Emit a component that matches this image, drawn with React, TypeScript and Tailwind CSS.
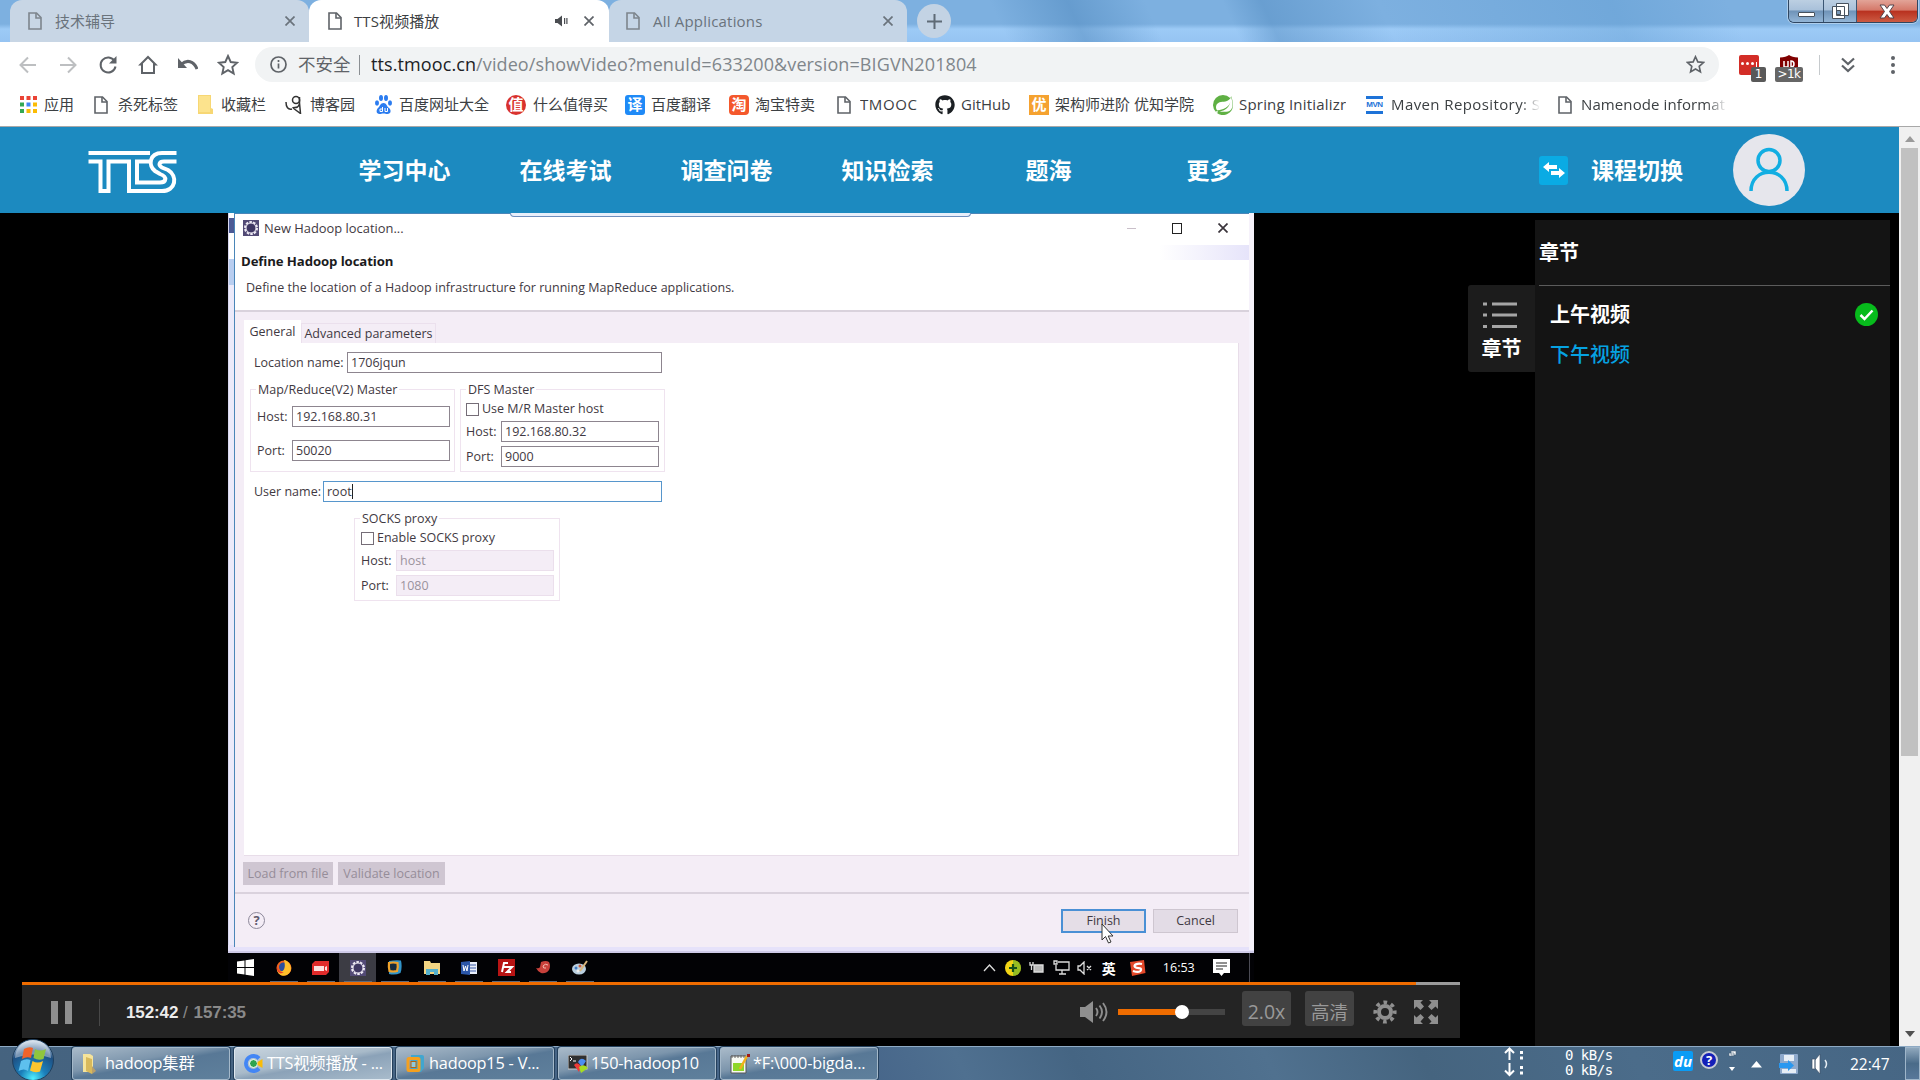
import type { ReactNode } from "react";
import { FaGithub } from "react-icons/fa";
import { SiSpring } from "react-icons/si";

const ui = "font-['Open_Sans','Noto_Sans_CJK_SC',sans-serif]";

function DocIcon({ color = "#5f6368" }: { color?: string }) {
  return (
    <svg width="14" height="18" viewBox="0 0 14 18" fill="none" stroke={color} strokeWidth="1.6" className="shrink-0">
      <path d="M1 1h7.5L13 5.5V17H1z" />
      <path d="M8 1v5h5" />
    </svg>
  );
}

function Cross({ color = "#5f6368" }: { color?: string }) {
  return (
    <svg width="10" height="10" viewBox="0 0 10 10" stroke={color} strokeWidth="1.7" className="shrink-0">
      <path d="M0.5 0.5l9 9M9.5 0.5l-9 9" />
    </svg>
  );
}

function TabStrip() {
  return (
    <div className="relative flex h-[42px] bg-[linear-gradient(180deg,#7db0e0_0px,#7db0e0_24px,#9ccaf6_29px,#96c4f2_42px)]">
      <div className="absolute inset-0 bg-[linear-gradient(65deg,transparent_52%,#4f88bd80_56%,transparent_60%,transparent_64%,#4f88bd70_66%,transparent_72%,#5c9ad060_84%,transparent_90%)]" />
      <div className="relative ml-[10px] flex h-[42px] w-[299px] items-center rounded-t-xl bg-[#c8d6e5] pl-[18px] text-[15px] text-[#6a737c]">
        <DocIcon color="#7d858d" />
        <span className="ml-[13px] w-[230px]">技术辅导</span>
        <Cross color="#6a737c" />
      </div>
      <div className="relative flex h-[42px] w-[300px] items-center rounded-t-xl bg-white pl-[19px] text-[15px] text-[#3c4043]">
        <DocIcon />
        <span className="ml-[12px] w-[201px] tracking-[0.1px]">TTS视频播放</span>
        <svg width="13" height="12" viewBox="0 0 13 12" fill="#4a4d51">
          <path d="M0 4h2.500L7 0.500v11L2.500 8H0zM9 3h1.200v6H9zM11.300 3h1.200v6h-1.200z" />
        </svg>
        <span className="ml-[16px] flex"><Cross /></span>
      </div>
      <div className="relative flex h-[42px] w-[298px] items-center rounded-t-xl bg-[#c5d5e6] pl-[17px] text-[15px] text-[#6a737c]">
        <DocIcon color="#7d858d" />
        <span className="ml-[13px] w-[230px] tracking-[0.2px]">All Applications</span>
        <Cross color="#6a737c" />
      </div>
      <div className="relative ml-[10px] mt-[4px] flex size-[34px] items-center justify-center rounded-full bg-[#c3d3e4]">
        <svg width="15" height="15" viewBox="0 0 15 15" stroke="#5f6b76" strokeWidth="2"><path d="M7.500 0v15M0 7.500h15" /></svg>
      </div>
      <div className="relative ml-auto mr-[2px] flex h-[23px] overflow-hidden rounded-b-md border border-t-0 border-[#2f4661] shadow-[0_0_0_1px_#ffffff60]">
        <div className="flex w-[35px] items-end justify-center border-r border-[#3b5673] bg-[linear-gradient(#bccfe2_0%,#a9c1da_45%,#6f93b8_50%,#93b5d6_100%)] pb-[5px]">
          <span className="h-[5px] w-[17px] rounded-[1px] border border-[#47525e] bg-white" />
        </div>
        <div className="flex w-[33px] items-center justify-center border-r border-[#3b5673] bg-[linear-gradient(#bccfe2_0%,#a9c1da_45%,#6f93b8_50%,#93b5d6_100%)]">
          <svg width="19" height="18" viewBox="0 0 19 18" fill="#fff" stroke="#47525e"><path d="M5.500 1.500h12v12h-12zM1.500 4.500h12v12h-12z" /><path d="M5.500 8.500h4v4h-4z" fill="#7898b8" /></svg>
        </div>
        <div className="flex w-[60px] items-center justify-center bg-[linear-gradient(#e2a498_0%,#d5796a_45%,#b93220_52%,#cc5a42_100%)]">
          <svg width="16" height="15" viewBox="0 0 16 15"><path d="M1 1h4.500L8 4.500 10.500 1H15l-4.500 6.500L15 14h-4.500L8 10.500 5.500 14H1l4.500-6.500z" fill="#fff" stroke="#50424a" /></svg>
        </div>
      </div>
    </div>
  );
}

const nav = { width: 20, height: 20, viewBox: "0 0 20 20", fill: "none", stroke: "#5f6368", strokeWidth: 2 };

function Star({ size }: { size: number }) {
  return (
    <svg width={size} height={size} viewBox="0 0 22 22" fill="none" stroke="#5f6368" strokeWidth="1.900" className="shrink-0">
      <path d="M11 2l2.700 6 6.500.7-4.900 4.400 1.400 6.400L11 16.200l-5.700 3.300 1.400-6.400L1.800 8.700l6.500-.7z" />
    </svg>
  );
}

function Toolbar() {
  return (
    <div className="flex h-[44px] items-center bg-white pt-px">
      <div className="ml-[18px] flex w-[237px] items-center gap-[20px]">
        <svg {...nav} stroke="#bdbfc1"><path d="M18 10H3M10 2.500L2.500 10l7.500 7.500" /></svg>
        <svg {...nav} stroke="#bdbfc1"><path d="M2 10h15M10 2.500l7.500 7.500-7.500 7.500" /></svg>
        <svg {...nav}><path d="M16.500 6A7.500 7.500 0 1 0 17.500 11.500" /><path d="M18.500 1v7.500H11z" fill="#5f6368" stroke="none" /></svg>
        <svg {...nav}><path d="M4 18V9.500H2.500L10 2l7.500 7.500H16V18z" /></svg>
        <svg {...nav}><path d="M3 9.500C9 4 16 6 19 14" strokeWidth="3" /><path d="M0 3v10h9z" fill="#5f6368" stroke="none" /></svg>
        <span className="ml-[-1px] flex"><Star size={22} /></span>
      </div>
      <div className={`flex h-[35px] w-[1464px] items-center rounded-full bg-[#f1f3f4] ${ui}`}>
        <svg width="17" height="17" viewBox="0 0 17 17" fill="none" stroke="#5f6368" strokeWidth="1.700" className="ml-[15px]"><circle cx="8.500" cy="8.500" r="7.500" /><path d="M8.500 7.500v5M8.500 4v2" /></svg>
        <span className="ml-[11px] w-[61px] text-[17.500px] text-[#5f6368]">不安全</span>
        <span className="h-[20px] w-px bg-[#8b8f93]" />
        <span className="ml-[11px] w-[1315px] text-[18px] tracking-[0.100px] text-[#80868b]"><span className="text-[#202124]">tts.tmooc.cn</span>/video/showVideo?menuId=633200&amp;version=BIGVN201804</span>
        <Star size={19} />
      </div>
      <div className="relative ml-[20px] flex h-[20px] w-[20px] items-center justify-center rounded-[2px] bg-[#d32d27]">
        <span className="flex gap-[2px]"><i className="size-[3px] rounded-full bg-white" /><i className="size-[3px] rounded-full bg-white" /><i className="size-[3px] rounded-full bg-white" /><i className="h-[5px] w-px bg-white" /></span>
        <span className="absolute left-[12px] top-[12px] h-[15px] w-[15px] rounded-[2px] bg-[#595959] text-center font-['DejaVu_Sans'] text-[12px] leading-[14px] text-white">1</span>
      </div>
      <div className="relative ml-[21px] h-[20px] w-[18px]">
        <svg width="18" height="20" viewBox="0 0 18 20"><path d="M0 2.500C4 2.500 7 1.500 9 0c2 1.500 5 2.500 9 2.500V14l-9 6-9-6z" fill="#800000" /><path d="M4 6v6h4V6M11 12V6a3 3 0 0 1 0 6" fill="none" stroke="#fff" strokeWidth="1.500" /></svg>
        <span className="absolute left-[-5px] top-[12px] h-[15px] w-[28px] rounded-[2px] bg-[#666] text-center font-['DejaVu_Sans'] text-[12px] leading-[14px] tracking-[-0.5px] text-white">&gt;1k</span>
      </div>
      <span className="ml-[21px] h-[20px] w-px bg-[#c6cacd]" />
      <svg width="14" height="16" viewBox="0 0 14 16" fill="none" stroke="#5f6368" strokeWidth="2.200" className="ml-[21px]"><path d="M1 1.500l6 5.500 6-5.500M1 8.500L7 14l6-5.500" /></svg>
      <svg width="6" height="18" viewBox="0 0 6 18" fill="#5f6368" className="ml-[35px]"><circle cx="3" cy="2" r="2" /><circle cx="3" cy="9" r="2" /><circle cx="3" cy="16" r="2" /></svg>
    </div>
  );
}

function Badge({ className, children }: { className: string; children: ReactNode }) {
  return <span className={`flex size-[20px] items-center justify-center text-[15px] font-bold leading-none text-white ${className}`}>{children}</span>;
}

const doc = <DocIcon />;
const fade = "[mask-image:linear-gradient(90deg,#000_86%,transparent)]";
const bookmarks: { w: string; iw: string; label: string; icon: ReactNode; t?: string }[] = [
  {
    w: "w-[74px]", iw: "w-[24px]", label: "应用",
    icon: (
      <svg width="17" height="17" viewBox="0 0 17 17">
        {["#ea4335", "#ea4335", "#ea4335", "#34a853", "#4285f4", "#fbbc05", "#34a853", "#fbbc05", "#fbbc05"].map((c, i) => (
          <rect key={i} x={(i % 3) * 6.5} y={Math.floor(i / 3) * 6.5} width="4" height="4" fill={c} />
        ))}
      </svg>
    ),
  },
  { w: "w-[103px]", iw: "w-[24px]", label: "杀死标签", icon: doc },
  { w: "w-[88px]", iw: "w-[24px]", label: "收藏栏", icon: <svg width="16" height="19" viewBox="0 0 16 19"><path d="M1 0h13v13l2 1v5H1z" fill="#f7d774" /><path d="M2 1h11v16H2z" fill="#fce38d" /></svg> },
  { w: "w-[90px]", iw: "w-[25px]", label: "博客园", icon: <svg width="19" height="19" viewBox="0 0 19 19" fill="none" stroke="#333" strokeWidth="1.500"><path d="M1 7c0 5 2 8 6 7" /><circle cx="11" cy="5" r="3.500" /><path d="M14.500 2c0 5 1 8-2 10-2 1-4 0-5 1M14.500 8l1 10.500L8 13" /></svg> },
  { w: "w-[131px]", iw: "w-[24px]", label: "百度网址大全", icon: <svg width="17" height="19" viewBox="0 0 17 19" fill="#2b7cf0"><ellipse cx="2" cy="8" rx="2" ry="2.700" /><ellipse cx="6" cy="3" rx="2" ry="3" /><ellipse cx="11" cy="3" rx="2" ry="3" /><ellipse cx="15" cy="8" rx="2" ry="2.700" /><path d="M8.500 8c3 0 3 3 5.500 5s2 6-1.500 6c-2 0-2-.5-4-.5s-2 .5-4 .5C1 19 1 15 3 13s2.500-5 5.500-5z" /><path d="M5 14h2.500v-2M5 14v2.500h2.500V13M10 13v3.500h2.500V13" stroke="#fff" fill="none" /></svg> },
  { w: "w-[119px]", iw: "w-[27px]", label: "什么值得买", icon: <Badge className="rounded-full bg-[#d9322e]">值</Badge> },
  { w: "w-[104px]", iw: "w-[26px]", label: "百度翻译", icon: <Badge className="rounded-[3px] bg-[#1f8af7]">译</Badge> },
  { w: "w-[108px]", iw: "w-[26px]", label: "淘宝特卖", icon: <Badge className="rounded-[4px] bg-[#f4582c]">淘</Badge> },
  { w: "w-[98px]", iw: "w-[23px]", label: "TMOOC", t: "tracking-[0.6px]", icon: doc },
  { w: "w-[94px]", iw: "w-[26px]", label: "GitHub", icon: <FaGithub size={20} color="#1b1f23" /> },
  { w: "w-[184px]", iw: "w-[26px]", label: "架构师进阶 优知学院", icon: <Badge className="bg-[#f5a230]">优</Badge> },
  { w: "w-[153px]", iw: "w-[26px]", label: "Spring Initializr", t: "tracking-[0.2px]", icon: <SiSpring size={20} color="#5fb044" /> },
  { w: "w-[192px]", iw: "w-[25px]", label: "Maven Repository: S", t: `w-[154px] tracking-[0.4px] [mask-image:linear-gradient(90deg,#000_84%,transparent_97%)]`, icon: <span className="flex h-[18px] w-[17px] items-center justify-center border-y-[3px] border-[#1e73d8] font-['Liberation_Sans'] text-[8px] font-bold tracking-[-0.500px] text-[#1e73d8]">MVN</span> },
  { w: "w-[170px]", iw: "w-[23px]", label: "Namenode informat", t: `w-[146px] tracking-[0.1px] ${fade}`, icon: doc },
];

function Bookmarks() {
  return (
    <div className={`flex h-[41px] items-center border-b border-[#a8a8a8] bg-white pb-[3px] pl-[20px] text-[15px] text-[#3c4043] ${ui}`}>
      {bookmarks.map((b) => (
        <div key={b.label} className={`flex shrink-0 items-center ${b.w}`}>
          <span className={`flex shrink-0 ${b.iw}`}>{b.icon}</span>
          <span className={`overflow-hidden whitespace-nowrap ${b.t ?? ""}`}>{b.label}</span>
        </div>
      ))}
    </div>
  );
}

function SiteHeader() {
  return (
    <div className={`flex h-[86px] items-center bg-[#1c8ac0] text-[23px] font-bold text-white ${ui}`}>
      <svg width="110" height="60" viewBox="0 0 110 60" fill="none" stroke="#fff" strokeWidth="4" className="ml-[80px] mt-[3px]">
        <path d="M8.500 11H70M8.500 19.500h12V49h8V19.500H49V49h33C96 49 98 34 88 28l-6-2.500C78 23 79 19.500 84 19.500h12.500" />
        <path d="M96.500 11H82C69 11 68 24 75 29l5 3c8 3 6 8.500 0 8.500H57v-21h12" />
      </svg>
      <div className="ml-[134px] flex">
        {["学习中心", "在线考试", "调查问卷", "知识检索", "题海", "更多"].map((t) => (
          <span key={t} className="w-[161px] text-center">{t}</span>
        ))}
      </div>
      <span className="ml-[249px] flex h-[29px] w-[29px] items-center justify-center rounded-[3px] bg-[#0aabe4]">
        <svg width="22" height="16" viewBox="0 0 22 16" fill="#fff"><path d="M0 5l6-5v3h8v4H6v3zM22 11l-6-5v3H8v4h8v3z" /></svg>
      </span>
      <span className="ml-[23px] w-[142px]">课程切换</span>
      <span className="flex size-[72px] items-center justify-center rounded-full bg-[#e6e6ec]">
        <svg width="42" height="46" viewBox="0 0 42 46" fill="none" stroke="#12aee2" strokeWidth="3.500"><circle cx="21" cy="13.500" r="11" /><path d="M3 44C3 19 39 19 39 44" /></svg>
      </span>
    </div>
  );
}

function Input({ className, children }: { className: string; children: ReactNode }) {
  return <span className={`flex h-[21px] items-center border pl-[3px] ${className}`}>{children}</span>;
}

function Group({ label, className, children }: { label: string; className: string; children: ReactNode }) {
  return (
    <div className={`relative border border-[#efe3ef] ${className}`}>
      <span className="absolute left-[5px] top-[-8px] bg-white px-[2px] leading-[16px]">{label}</span>
      {children}
    </div>
  );
}

const field = "border-[#8d858f]";
const off = "border-[#ebdfec] bg-[#f4edf6] text-[#9b939d]";

function EclipseIcon() {
  return (
    <svg width="16" height="16" viewBox="0 0 16 16" className="shrink-0"><rect width="16" height="16" fill="#524a75" /><circle cx="8" cy="8" r="6" fill="none" stroke="#eeeaf4" strokeWidth="2" strokeDasharray="2.500 1.200" /><circle cx="8" cy="8" r="5" fill="#3f3763" stroke="#eeeaf4" /></svg>
  );
}

function Dialog() {
  return (
    <div className="flex h-[740px] w-[1026px] border-b-2 border-[#cfcbe8] bg-[#e6e2fa]">
      <div className="flex h-[732px] w-[6px] flex-col border-l border-[#d8d8f0] bg-[#eceafa]">
        <span className="h-[46px] bg-white pt-[5px]"><i className="block h-[15px] w-[5px] bg-[#4c5a95]" /></span>
        <span className="h-[26px] bg-[#b9cef0]" />
      </div>
      <div className="relative flex h-[734px] w-[1015px] flex-col border-l border-t border-[#4a86b8] bg-[#f4edf6] text-[12.500px] leading-[16px] text-[#3f3942]">
        <span className="absolute left-[275px] top-[-1px] h-[4px] w-[461px] rounded-b-sm border border-t-0 border-[#6f8fbe] bg-[#e8effb]" />
        <span className="absolute right-0 top-[31px] h-[15px] w-[90px] bg-[linear-gradient(90deg,transparent,#e6e4fa)]" />
        <div className="h-[96px] bg-white">
          <div className="flex h-[28px] items-center pl-[8px]">
            <EclipseIcon />
            <span className="ml-[5px] w-[630px] text-[12.900px]">New Hadoop location...</span>
            <span className="ml-[233px] h-px w-[9px] bg-[#c9bfc9]" />
            <span className="ml-[36px] h-[11px] w-[10px] border border-[#222]" />
            <span className="ml-[36px] flex"><Cross color="#3a343b" /></span>
          </div>
          <div className="pl-[6px] pt-[11px] text-[13.200px] font-bold tracking-[-0.100px] text-[#1b1b1d]">Define Hadoop location</div>
          <div className="pl-[11px] pt-[11px] tracking-[0.02px]">Define the location of a Hadoop infrastructure for running MapReduce applications.</div>
        </div>
        <div className="h-[2px] bg-[#d9d2dc]" />
        <div className="ml-[9px] mt-[9px] flex h-[22px] items-end">
          <span className="flex h-[23px] w-[57px] items-center justify-center bg-white">General</span>
          <span className="flex h-[20px] w-[135px] items-center justify-center border border-b-0 border-[#ebe0ed]">Advanced parameters</span>
        </div>
        <div className="ml-[9px] h-[513px] w-[995px] border-b border-r border-[#e8dde9] bg-white pl-[6px]">
          <div className="flex items-center pl-[4px] pt-[9px]"><span className="w-[93px]">Location name:</span><Input className={`w-[315px] ${field}`}>1706jqun</Input></div>
          <div className="mt-[16px] flex gap-[5px]">
            <Group label="Map/Reduce(V2) Master" className="h-[83px] w-[205px] pl-[6px] pt-[16px]">
              <div className="flex items-center"><span className="w-[35px]">Host:</span><Input className={`w-[158px] ${field}`}>192.168.80.31</Input></div>
              <div className="mt-[13px] flex items-center"><span className="w-[35px]">Port:</span><Input className={`w-[158px] ${field}`}>50020</Input></div>
            </Group>
            <Group label="DFS Master" className="h-[83px] w-[205px] pl-[5px] pt-[11px]">
              <div className="flex items-center"><span className="mr-[3px] size-[13px] border border-[#756d77]" />Use M/R Master host</div>
              <div className="mt-[4px] flex items-center"><span className="w-[35px]">Host:</span><Input className={`w-[158px] ${field}`}>192.168.80.32</Input></div>
              <div className="mt-[4px] flex items-center"><span className="w-[35px]">Port:</span><Input className={`w-[158px] ${field}`}>9000</Input></div>
            </Group>
          </div>
          <div className="mt-[9px] flex items-center pl-[4px]"><span className="w-[69px]">User name:</span><Input className="w-[339px] border-[#5796cc]">root<i className="h-[15px] w-px bg-[#222]" /></Input></div>
          <Group label="SOCKS proxy" className="ml-[104px] mt-[16px] h-[83px] w-[206px] pl-[6px] pt-[11px]">
            <div className="flex items-center"><span className="mr-[3px] size-[13px] border border-[#756d77]" />Enable SOCKS proxy</div>
            <div className="mt-[4px] flex items-center"><span className="w-[35px]">Host:</span><Input className={`w-[158px] ${off}`}>host</Input></div>
            <div className="mt-[4px] flex items-center"><span className="w-[35px]">Port:</span><Input className={`w-[158px] ${off}`}>1080</Input></div>
          </Group>
        </div>
        <div className="ml-[8px] mt-[6px] flex gap-[5px] text-[#968d99]">
          <span className="flex h-[23px] w-[90px] items-center justify-center bg-[#cfc6d2]">Load from file</span>
          <span className="flex h-[23px] w-[107px] items-center justify-center bg-[#cfc6d2]">Validate location</span>
        </div>
        <div className="mt-[7px] h-[2px] bg-[#dad2dd]" />
        <div className="flex items-center pl-[13px] pt-[15px]">
          <span className="mb-[2px] flex size-[17px] items-center justify-center rounded-full border-[1.500px] border-[#8c8799] text-[13px] font-bold leading-none text-[#5f5a6e]">?</span>
          <span className="relative ml-[796px] flex h-[24px] w-[85px] items-center justify-center border-2 border-[#4a90d5] bg-[#e5dee7]">
            Finish
            <svg width="13" height="21" viewBox="0 0 13 21" className="absolute left-[38px] top-[12px]"><path d="M1 1v16l3.500-3.500L7.500 20l2.500-1-2.800-6H12z" fill="#fff" stroke="#333" /></svg>
          </span>
          <span className="ml-[7px] flex h-[24px] w-[85px] items-center justify-center border border-[#cec6d0] bg-[#e3dce6]">Cancel</span>
        </div>
      </div>
      <div className="h-[737px] w-[5px] bg-[#f6f2fb]" />
    </div>
  );
}

function WinLogo() {
  return <svg width="17" height="17" viewBox="0 0 17 17" fill="#fff"><path d="M0 2.500l7.500-1V8H0zM8.500 1.300L17 0v8H8.500zM0 9h7.500v6.500L0 14.500zM8.500 9H17v8l-8.500-1.300z" /></svg>;
}

const innerApps: ReactNode[] = [
  <svg width="16" height="16" viewBox="0 0 16 16"><circle cx="8" cy="8" r="7.500" fill="#f0641e" /><circle cx="7.500" cy="7" r="4.500" fill="#2b4f9e" /><path d="M8 0c7 1 10 11 3 15-4 2-9 0-10-5 4 4 10 1 7-10z" fill="#ffc02b" /><path d="M1 5c0 5 3 8 7 7-3 3-8 1-7-7z" fill="#e8372b" /></svg>,
  <svg width="17" height="14" viewBox="0 0 17 14"><path d="M3 0h14v11l-3 3H0V3z" fill="#e02b2b" /><path d="M2 5h10v5H2zM13 6l2-1v5l-2-1z" fill="#fbe1e1" /></svg>,
  <EclipseIcon />,
  <svg width="15" height="15" viewBox="0 0 15 15"><path d="M2 1Q8 0 14 0.500Q15.500 7 13.500 13Q8 15.500 2 14z" fill="#3294c9" /><path d="M2 3q4-1 8.500 0 .8 4-.5 8-4 1-7.500 0-1-4-.5-8z" fill="#172c3d" stroke="#f0a32c" strokeWidth="2.200" /></svg>,
  <svg width="16" height="14" viewBox="0 0 16 14"><path d="M0 0h6l1 2h9v11H0z" fill="#f3d583" /><path d="M2 14V8h12v6h-4v-3H6v3z" fill="#56b0cc" /></svg>,
  <svg width="16" height="14" viewBox="0 0 16 14"><rect x="7" y="1" width="9" height="12" fill="#e9eefa" /><path d="M9 4h6M9 7h6M9 10h6" stroke="#3a5ba6" /><path d="M0 1l9-1v14l-9-1z" fill="#2b56a8" /><path d="M2 4l1 6 1.500-5L6 10l1-6" stroke="#fff" fill="none" /></svg>,
  <svg width="17" height="17" viewBox="0 0 17 17"><rect width="17" height="17" fill="#b81414" /><path d="M4 13L6 4h4M5 8h4M9 8h5l-5 5h4" stroke="#fff" strokeWidth="2" fill="none" /></svg>,
  <svg width="15" height="13" viewBox="0 0 15 13"><path d="M5 1q5-2 8 0 2 4 0 8-3 4-8 3-3-1-5-5 3 1 4-1z" fill="#c8413b" /><path d="M12 4q-3-2-5 1 0 3 3 2" fill="none" stroke="#f2b9ae" /></svg>,
  <svg width="16" height="15" viewBox="0 0 16 15"><ellipse cx="7" cy="9" rx="7" ry="5.500" fill="#b9cede" /><circle cx="4" cy="8" r="1.500" fill="#3f79c4" /><circle cx="8" cy="6" r="1.500" fill="#c85a3c" /><circle cx="6" cy="11" r="1.500" fill="#eee" /><path d="M8 11L15 1" stroke="#d9b47a" strokeWidth="2" /></svg>,
];

function InnerTaskbar() {
  const line = { fill: "none", stroke: "#ddd", strokeWidth: 1.3 };
  return (
    <div className="flex h-[29px] items-center bg-[#020205] pl-[9px] text-white">
      <WinLogo />
      <div className="ml-[11px] flex h-full">
        {innerApps.map((a, i) => (
          <span key={i} className={`flex h-full w-[37.100px] items-center justify-center ${i === 2 ? "bg-[#3c3c44]" : ""}`}>
            <span className="flex h-full w-[28px] items-center justify-center border-b border-[#5d6c80] pt-px">{a}</span>
          </span>
        ))}
      </div>
      <svg width="13" height="8" viewBox="0 0 13 8" {...line} className="ml-[384px]"><path d="M1 7l5.500-6L12 7" /></svg>
      <svg width="16" height="16" viewBox="0 0 16 16" className="ml-[9px]"><circle cx="8" cy="8" r="8" fill="#f2d416" /><path d="M8 0a8 8 0 0 1 0 16z" fill="#3aa52e" opacity=".5" /><path d="M8 4v8M4 8h8" stroke="#14501a" strokeWidth="2.200" /></svg>
      <svg width="16" height="12" viewBox="0 0 16 12" {...line} className="ml-[8px]"><path d="M5 3h9v7H5z" fill="#bbb" /><path d="M1 0v3h3V0M2.500 3v5" /></svg>
      <svg width="17" height="15" viewBox="0 0 17 15" {...line} className="ml-[8px]"><path d="M5 2h11v8H3V5M1 1h3v3H1zM9 10v4M6 14h7" /></svg>
      <svg width="15" height="14" viewBox="0 0 15 14" {...line} className="ml-[7px]"><path d="M1 5h2l4-4v12L3 9H1zM10 5l4 4M14 5l-4 4" /></svg>
      <span className="ml-[10px] font-['Noto_Sans_CJK_SC'] text-[14px] font-bold leading-none">英</span>
      <svg width="16" height="16" viewBox="0 0 16 16" className="ml-[14px]"><path d="M0 2l14-2 1.500 13L2 16z" fill="#e3482a" /><path d="M12 4C7 3 3 5 5 7s7 0 6 3-5 2-8 1" stroke="#fff" strokeWidth="2.200" fill="none" /></svg>
      <span className="ml-[17px] w-[50px] pt-px font-['Open_Sans'] text-[12.500px] leading-none">16:53</span>
      <svg width="17" height="17" viewBox="0 0 17 17"><path d="M0 0h17v14h-6l-2.500 3L6 14H0z" fill="#fff" /><path d="M3 4h11M3 7h11M3 10h7" stroke="#222" /></svg>
      <span className="ml-[19px] h-full w-px bg-[#4b4b55]" />
    </div>
  );
}

function PlayerBar() {
  return (
    <div className="ml-[22px] h-[56px] w-[1438px] bg-[#242424]">
      <div className="flex h-[3px] bg-[#9b9b9b]"><span className="w-[1394px] bg-[#ef6c00]" /></div>
      <div className="flex h-[53px] items-center pt-px font-['Liberation_Sans']">
        <span className="ml-[29px] h-[23px] w-[7px] bg-[#8f8f8f]" />
        <span className="ml-[7px] h-[23px] w-[7px] bg-[#8f8f8f]" />
        <span className="ml-[27px] mr-[26px] h-[27px] w-px bg-[#484848]" />
        <span className="w-[954px] pt-[2px] text-[17px] font-bold tracking-[-0.100px] text-[#8a8a8a]"><b className="text-[#ececec]">152:42</b> <span className="font-normal">/</span><span className="ml-[6px]">157:35</span></span>
        <svg width="28" height="22" viewBox="0 0 28 22" fill="#8f8f8f"><path d="M0 6h5l8-6v22l-8-6H0z" /><path d="M16 7q3 4 0 8M19.500 4.500q5 6.500 0 13M23 2q7 9 0 18" fill="none" stroke="#8f8f8f" strokeWidth="1.900" /></svg>
        <div className="relative ml-[10px] flex h-[6px] w-[107px] bg-[#444]">
          <span className="w-[64px] bg-[#ef6c00]" />
          <span className="absolute left-[57px] top-[-4px] size-[14px] rounded-full bg-white" />
        </div>
        <span className="mb-[7px] ml-[17px] flex h-[35px] w-[49px] items-center justify-center rounded-[3px] bg-[#424242] pt-[7px] font-['Open_Sans'] text-[19.500px] text-[#999]">2.0x</span>
        <span className="mb-[7px] ml-[14px] flex h-[35px] w-[49px] items-center justify-center rounded-[3px] bg-[#424242] pt-[7px] font-['Noto_Sans_CJK_SC'] text-[18.500px] text-[#999]">高清</span>
        <svg width="24" height="24" viewBox="0 0 24 24" fill="none" stroke="#8f8f8f" className="ml-[19px]"><circle cx="12" cy="12" r="6" strokeWidth="4" /><circle cx="12" cy="12" r="9.800" strokeWidth="3.600" strokeDasharray="3.700 4" strokeDashoffset="1.850" /></svg>
        <svg width="24" height="24" viewBox="0 0 24 24" fill="#8f8f8f" className="ml-[17px]"><path d="M0 0h9L6.500 2.500 10 6.500 6.500 10l-4-3.500L0 9zM24 0h-9l2.500 2.500L14 6.500 17.500 10l4-3.500L24 9zM0 24h9l-2.500-2.500L10 17.500 6.500 14l-4 3.500L0 15zM24 24h-9l2.500-2.500L14 17.500l3.500-3.500 4 3.500L24 15z" /></svg>
      </div>
    </div>
  );
}

function Sidebar() {
  return (
    <div className="flex text-[20px] font-bold leading-none text-white">
      <div className="mt-[72px] flex h-[87px] w-[67px] flex-col items-center rounded-l-[3px] bg-[#1c1c1c] pt-[17px]">
        <svg width="34" height="27" viewBox="0 0 34 27" stroke="#a5a5a5" strokeWidth="3" className="mr-[3px]"><path d="M9 2h25M9 13h25M9 24.500h25M0 2h4M0 13h4M0 24.500h4" /></svg>
        <span className="mt-[10px]">章节</span>
      </div>
      <div className="mt-[7px] w-[355px] bg-[#141414] pl-[4px]">
        <div className="h-[66px] border-b border-[#5c5c5c] pt-[23px]">章节</div>
        <div className="flex h-[40px] items-center justify-between pl-[11px] pr-[12px] pt-[17px]">
          上午视频
          <svg width="23" height="23" viewBox="0 0 23 23"><circle cx="11.500" cy="11.500" r="11.500" fill="#07bb1c" /><path d="M5.500 12l4 4 8-8.500" fill="none" stroke="#fff" strokeWidth="2.500" /></svg>
        </div>
        <div className="flex h-[40px] items-center pl-[11px] pt-[17px] font-medium text-[#06a2e2]">下午视频</div>
      </div>
    </div>
  );
}

const tasks: { label: string; active?: boolean; icon: ReactNode }[] = [
  { label: "hadoop集群", icon: <svg width="14" height="20" viewBox="0 0 14 20"><path d="M1 0h7l3 2v16H1z" fill="#f6e49b" /><path d="M4 3l6 2v15l-6-3z" fill="#d8b95c" /><path d="M10 12l4 5-4 3z" fill="#b9a06a" /></svg> },
  { label: "TTS视频播放 - ...", active: true, icon: <svg width="19" height="19" viewBox="0 0 19 19"><path d="M9.500 0a9.500 9.500 0 1 0 7 16l-3-3a5.500 5.500 0 1 1 0-7l3-3a9.500 9.500 0 0 0-7-3z" fill="#4386f5" /><circle cx="9.500" cy="9.500" r="4" fill="#2ea44f" stroke="#fff" /><path d="M13.500 8l5-3v9l-5-3z" fill="#fbbc05" /></svg> },
  { label: "hadoop15 - V...", icon: <svg width="18" height="18" viewBox="0 0 18 18"><path d="M5 0h11q2 0 2 2v11l-3 4H5z" fill="#41a6cf" /><rect x="2" y="3.500" width="11" height="12" rx="1" fill="none" stroke="#f5a01e" strokeWidth="3" /><rect x="5" y="6.500" width="5" height="6" fill="#8ec9de" stroke="#b8650c" /></svg> },
  { label: "150-hadoop10", icon: <svg width="20" height="18" viewBox="0 0 20 18"><rect width="19" height="14" fill="#303030" stroke="#c9c9c9" /><path d="M2 2l2 2-2 2M5 6h3" stroke="#fff" fill="none" /><path d="M6 10q3-4 7 1l-2 6z" fill="#ef3b36" /><path d="M10 7q3-6 8-1l-4 6z" fill="#4b8ef2" /><path d="M11 12q5-4 9 1l-7 5z" fill="#a6dd22" /></svg> },
  { label: "*F:\\000-bigda...", icon: <svg width="20" height="20" viewBox="0 0 20 20"><path d="M1 2h15v17H1z" fill="#f7f9f2" stroke="#555" /><path d="M3 9h11v8H3z" fill="#8ed628" /><path d="M2 1v3M5 1v3M8 1v3M11 1v3M14 1v3" stroke="#666" /><path d="M10 15L17 2" stroke="#f2b01e" strokeWidth="2.500" /><path d="M17 0h3v3h-3z" fill="#a01818" /></svg> },
];

function Taskbar() {
  return (
    <div className={`flex h-[34px] border-t border-[#8eaac4] bg-[linear-gradient(65deg,#45637f_0%,#47668a_45%,#4f7090_50%,#456583_56%,#50718f_66%,#45647f_74%,#4b6c8a_85%,#466684_100%)] text-white ${ui}`}>
      <div className="relative w-[72px]">
        <svg width="44" height="44" viewBox="0 0 44 44" className="absolute left-[11px] top-[-9px]">
          <defs>
            <radialGradient id="orb" cx=".5" cy=".95" r=".9"><stop offset="0" stopColor="#4ff0ff" /><stop offset=".35" stopColor="#1b80bb" /><stop offset=".75" stopColor="#1e4f82" /><stop offset="1" stopColor="#b7cbe0" /></radialGradient>
          </defs>
          <circle cx="22" cy="22" r="20.500" fill="url(#orb)" stroke="#20405f" />
          <path d="M4 20a18 18 0 0 1 36 0q-18-7-36 0z" fill="#fff" opacity=".4" />
          <path d="M13 11q5-3 9-1l-2 10q-4-2-9 1z" fill="#f0632a" />
          <path d="M24 11q5 3 11 0l-2.500 10q-5 2-10-1z" fill="#8fc63e" />
          <path d="M10 23q5-3 9.500-1L17 33q-4-3-9.500 0z" fill="#5ec0ee" />
          <path d="M21.500 23q5 3 10.500 0l-3 10.500q-5 2-10-1z" fill="#fdc52f" />
        </svg>
      </div>
      <div className="flex gap-[4px]">
        {tasks.map((t) => (
          <div key={t.label} className={`flex h-[33px] w-[158px] items-center rounded-[3px] border pl-[9px] shadow-[0_0_0_1px_#24405c] ${t.active ? "border-[#dfe8ef] bg-[linear-gradient(170deg,#c9d5df_0%,#a8bac9_45%,#8ba2b8_55%,#a8bbcb_100%)]" : "border-[#a5b9ca] bg-[linear-gradient(170deg,#a9bac9_0%,#7c95ac_40%,#587896_52%,#5f809c_100%)]"}`}>
            <span className="flex w-[23px]">{t.icon}</span>
            <span className="whitespace-nowrap pb-px text-[16.300px] tracking-[-0.200px]">{t.label}</span>
          </div>
        ))}
      </div>
      <svg width="20" height="30" viewBox="0 0 20 30" fill="none" stroke="#fff" strokeWidth="2" className="ml-[626px]"><path d="M5.500 13V2M1 6l4.500-4.500L10 6M5.500 16v12M1 23.500L5.500 28l4.500-4.500" /><path d="M16 5.500h3M16 11h3M16 20.500h3M16 26h3" strokeWidth="3" /></svg>
      <div className="ml-[41px] w-[108px] whitespace-pre font-['DejaVu_Sans_Mono'] text-[14px] leading-[15px] tracking-[-0.500px]"><div className="pt-px">0 kB/s</div><div>0 kB/s</div></div>
      <span className="mt-[4px] flex size-[20px] items-center justify-center rounded-[2px] bg-[#0a9cf5] text-[15px] font-bold italic leading-none">du</span>
      <span className="ml-[7px] mt-[4px] flex size-[18px] items-center justify-center rounded-full border-2 border-[#c8ccd4] bg-[#1420b8] text-[13px] font-bold leading-none">?</span>
      <svg width="10" height="22" viewBox="0 0 10 22" className="ml-[10px] mt-[3px]"><path d="M3 1h5v4H3zM1 3h5v3H1z" fill="#fff" stroke="#47617b" strokeWidth=".6" /><path d="M1 17h6l-3 4z" fill="#fff" /></svg>
      <svg width="11" height="7" viewBox="0 0 11 7" className="ml-[13px] mt-[14px]"><path d="M0 6.500L5.500 0 11 6.500z" fill="#fff" /></svg>
      <svg width="20" height="20" viewBox="0 0 20 20" className="ml-[17px] mt-[7px]"><rect x="1" width="18" height="20" rx="1" fill="#8ea9cc" /><path d="M5 1h10v6H5zM3 15h14v4H3z" fill="#e7eef6" /><path d="M0 9h9V6l6 5.500L9 17v-3H0z" fill="#2a98f0" /></svg>
      <svg width="17" height="20" viewBox="0 0 17 20" className="ml-[12px] mt-[7px]"><path d="M1 5h3v10H1zM4 6l5-6v20l-5-6z" fill="#fff" stroke="#40556a" strokeWidth=".7" /><path d="M14 6q3 4 0 8" stroke="#e6edf3" fill="none" strokeWidth="1.500" /></svg>
      <span className="ml-[22px] w-[55px] pt-[5px] text-[15.500px] leading-[24px]">22:47</span>
      <span className="h-[33px] flex-1 border border-[#9fb6ca] bg-[linear-gradient(#90a8bd,#4a6b89_50%,#58789a)]" />
    </div>
  );
}

export default function App() {
  return (
    <div className={`flex h-[1080px] w-[1920px] flex-col overflow-hidden bg-black ${ui}`}>
      <TabStrip />
      <Toolbar />
      <Bookmarks />
      <div className="flex h-[919px]">
        <div className="w-[1899px]">
          <SiteHeader />
          <div className="flex h-[833px]">
            <div className="w-[1468px]">
              <div className="ml-[228px] w-[1026px]">
                <Dialog />
                <InnerTaskbar />
              </div>
              <PlayerBar />
            </div>
            <Sidebar />
          </div>
        </div>
        <div className="flex w-[21px] flex-col items-center bg-[#f0f0f0] pt-[9px]">
          <svg width="10" height="6" viewBox="0 0 10 6" fill="#9a9a9a"><path d="M0 6l5-6 5 6z" /></svg>
          <span className="mt-[6px] h-[608px] w-[17px] bg-[#c1c1c1]" />
          <svg width="10" height="6" viewBox="0 0 10 6" fill="#505050" className="mt-auto mb-[9px]"><path d="M0 0l5 6 5-6z" /></svg>
        </div>
      </div>
      <Taskbar />
    </div>
  );
}
